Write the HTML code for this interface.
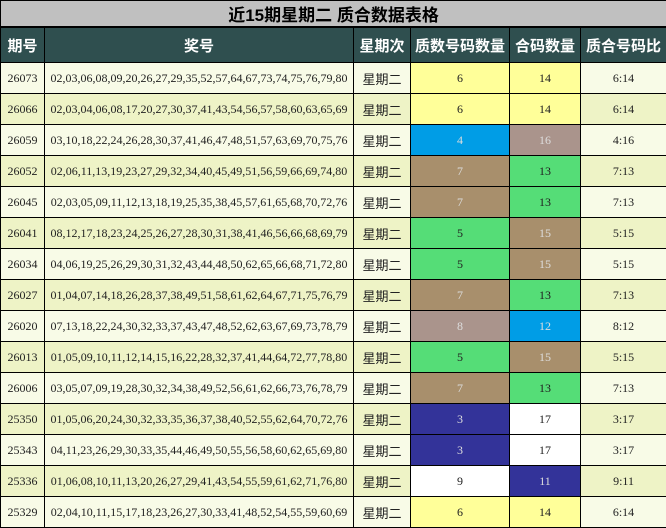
<!DOCTYPE html>
<html><head><meta charset="utf-8"><style>
html,body{margin:0;padding:0;background:#fff;}
table{border-collapse:collapse;table-layout:fixed;width:666px;}
td,th{border:1px solid #000;padding:0;text-align:center;overflow:hidden;white-space:nowrap;}
.t{height:24px;background:#c0c0c0;font:bold 17px "Liberation Sans","Noto Sans CJK SC",sans-serif;color:#000;border-bottom:2px solid #000;}
th{height:34px;background:#2f4f4f;color:#fff;font:bold 15px "Liberation Sans","Noto Sans CJK SC",sans-serif;}
td{height:30px;font:12px "Liberation Serif","Noto Serif CJK SC",serif;color:#222;}
td.w{font:13px "Liberation Sans","Noto Sans CJK SC",sans-serif;}
tr.a td{background:#f8fbe7;}
tr.b td{background:#eef3c6;}
tr td.y{background:#ffff99;}
tr td.bl{background:#009de6;color:#ddd;}
tr td.m{background:#aa948c;color:#ddd;}
tr td.tn{background:#a88f6c;color:#ddd;}
tr td.g{background:#55dd77;color:#222;}
tr td.n{background:#333399;color:#ddd;}
tr td.wh{background:#fff;}
</style></head><body>
<table>
<colgroup><col style="width:44px"><col style="width:309px"><col style="width:57px"><col style="width:99px"><col style="width:71px"><col style="width:86px"></colgroup>
<tr><td colspan="6" class="t">近15期星期二 质合数据表格</td></tr>
<tr><th>期号</th><th>奖号</th><th>星期次</th><th>质数号码数量</th><th>合码数量</th><th>质合号码比</th></tr>
<tr class="a"><td>26073</td><td>02,03,06,08,09,20,26,27,29,35,52,57,64,67,73,74,75,76,79,80</td><td class="w">星期二</td><td class="y">6</td><td class="y">14</td><td>6:14</td></tr>
<tr class="b"><td>26066</td><td>02,03,04,06,08,17,20,27,30,37,41,43,54,56,57,58,60,63,65,69</td><td class="w">星期二</td><td class="y">6</td><td class="y">14</td><td>6:14</td></tr>
<tr class="a"><td>26059</td><td>03,10,18,22,24,26,28,30,37,41,46,47,48,51,57,63,69,70,75,76</td><td class="w">星期二</td><td class="bl">4</td><td class="m">16</td><td>4:16</td></tr>
<tr class="b"><td>26052</td><td>02,06,11,13,19,23,27,29,32,34,40,45,49,51,56,59,66,69,74,80</td><td class="w">星期二</td><td class="tn">7</td><td class="g">13</td><td>7:13</td></tr>
<tr class="a"><td>26045</td><td>02,03,05,09,11,12,13,18,19,25,35,38,45,57,61,65,68,70,72,76</td><td class="w">星期二</td><td class="tn">7</td><td class="g">13</td><td>7:13</td></tr>
<tr class="b"><td>26041</td><td>08,12,17,18,23,24,25,26,27,28,30,31,38,41,46,56,66,68,69,79</td><td class="w">星期二</td><td class="g">5</td><td class="tn">15</td><td>5:15</td></tr>
<tr class="a"><td>26034</td><td>04,06,19,25,26,29,30,31,32,43,44,48,50,62,65,66,68,71,72,80</td><td class="w">星期二</td><td class="g">5</td><td class="tn">15</td><td>5:15</td></tr>
<tr class="b"><td>26027</td><td>01,04,07,14,18,26,28,37,38,49,51,58,61,62,64,67,71,75,76,79</td><td class="w">星期二</td><td class="tn">7</td><td class="g">13</td><td>7:13</td></tr>
<tr class="a"><td>26020</td><td>07,13,18,22,24,30,32,33,37,43,47,48,52,62,63,67,69,73,78,79</td><td class="w">星期二</td><td class="m">8</td><td class="bl">12</td><td>8:12</td></tr>
<tr class="b"><td>26013</td><td>01,05,09,10,11,12,14,15,16,22,28,32,37,41,44,64,72,77,78,80</td><td class="w">星期二</td><td class="g">5</td><td class="tn">15</td><td>5:15</td></tr>
<tr class="a"><td>26006</td><td>03,05,07,09,19,28,30,32,34,38,49,52,56,61,62,66,73,76,78,79</td><td class="w">星期二</td><td class="tn">7</td><td class="g">13</td><td>7:13</td></tr>
<tr class="b"><td>25350</td><td>01,05,06,20,24,30,32,33,35,36,37,38,40,52,55,62,64,70,72,76</td><td class="w">星期二</td><td class="n">3</td><td class="wh">17</td><td>3:17</td></tr>
<tr class="a"><td>25343</td><td>04,11,23,26,29,30,33,35,44,46,49,50,55,56,58,60,62,65,69,80</td><td class="w">星期二</td><td class="n">3</td><td class="wh">17</td><td>3:17</td></tr>
<tr class="b"><td>25336</td><td>01,06,08,10,11,13,20,26,27,29,41,43,54,55,59,61,62,71,76,80</td><td class="w">星期二</td><td class="wh">9</td><td class="n">11</td><td>9:11</td></tr>
<tr class="a"><td>25329</td><td>02,04,10,11,15,17,18,23,26,27,30,33,41,48,52,54,55,59,60,69</td><td class="w">星期二</td><td class="y">6</td><td class="y">14</td><td>6:14</td></tr>
</table>
</body></html>
